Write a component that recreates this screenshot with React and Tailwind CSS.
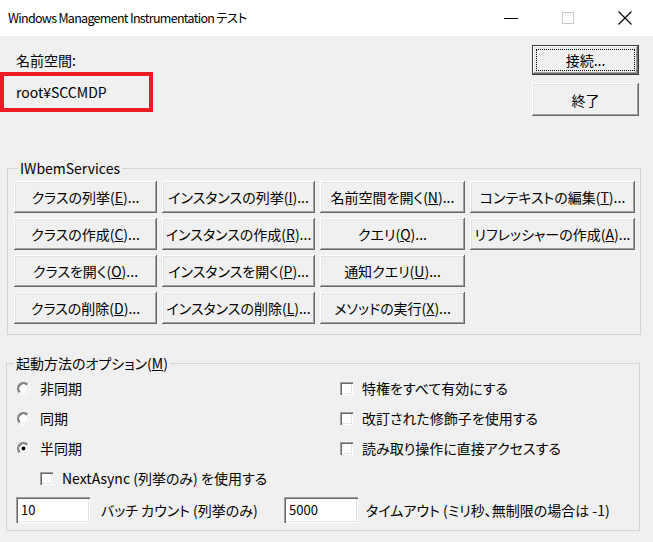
import React from "react";

const raised =
  "shadow-[inset_-1px_-1px_0_#696969,inset_1px_1px_0_#ffffff,inset_-2px_-2px_0_#a0a0a0,inset_2px_2px_0_#e3e3e3]";
const sunken =
  "shadow-[inset_1px_1px_0_#a0a0a0,inset_2px_2px_0_#696969,inset_-1px_-1px_0_#ffffff,inset_-2px_-2px_0_#e3e3e3]";

function Btn({ label, k, rest, className = "" }) {
  return (
    <button
      className={`flex items-center justify-center bg-[#f0f0f0] text-[14px] leading-[18px] text-black ${raised} ${className}`}
    >
      <span>
        {label}(<u>{k}</u>){rest}
      </span>
    </button>
  );
}

function Radio({ checked }) {
  return (
    <svg width="13" height="13" viewBox="0 0 12 12" className="shrink-0">
      <circle cx="6" cy="6" r="5.5" fill="#ffffff" />
      <path d="M2.11 9.89 A5.5 5.5 0 0 1 9.89 2.11" fill="none" stroke="#8a8a8a" strokeWidth="1.1" />
      <path d="M2.82 9.18 A4.5 4.5 0 0 1 9.18 2.82" fill="none" stroke="#5a5a5a" strokeWidth="1" />
      <path d="M2.11 9.89 A5.5 5.5 0 0 0 9.89 2.11" fill="none" stroke="#ffffff" strokeWidth="1" />
      <path d="M2.82 9.18 A4.5 4.5 0 0 0 9.18 2.82" fill="none" stroke="#e3e3e3" strokeWidth="1" />
      {checked && <circle cx="6" cy="6" r="1.8" fill="#000000" />}
    </svg>
  );
}

function Check() {
  return <div className={`h-[13px] w-[13px] shrink-0 bg-white ${sunken}`} />;
}

export default function App() {
  return (
    <div
      className="flex h-[542px] w-[653px] flex-col overflow-hidden bg-[#f0f0f0] text-black [font-feature-settings:'palt']"
      style={{ fontFamily: '"Noto Sans CJK JP", "Noto Sans", sans-serif' }}
    >
      {/* Title bar */}
      <div className="flex h-[36px] shrink-0 items-center bg-white">
        <div className="pl-[8px] text-[12.5px] leading-[20px] tracking-[-0.7px] [font-feature-settings:'normal']">
          Windows Management Instrumentation テスト
        </div>
        <div className="ml-auto flex h-full">
          <div className="flex w-[57px] items-center justify-center">
            <svg width="14" height="14" viewBox="0 0 14 14">
              <line x1="0" y1="7.5" x2="14" y2="7.5" stroke="#000" strokeWidth="1" />
            </svg>
          </div>
          <div className="flex w-[57px] items-center justify-center">
            <svg width="12" height="12" viewBox="0 0 12 12">
              <rect x="0.5" y="0.5" width="11" height="11" fill="none" stroke="#c8c8c8" strokeWidth="1" />
            </svg>
          </div>
          <div className="flex w-[57px] items-center justify-center">
            <svg width="14" height="14" viewBox="0 0 14 14">
              <path d="M0.5 0.5 L13.5 13.5 M13.5 0.5 L0.5 13.5" stroke="#000" strokeWidth="1.1" />
            </svg>
          </div>
        </div>
      </div>

      {/* Namespace area */}
      <div className="flex h-[123px] shrink-0 pr-[14px]">
        <div className="flex flex-col">
          <div className="mt-[14px] pl-[16px] text-[14px] leading-[20px]">名前空間:</div>
          <div className="mt-[2px] flex h-[40px] w-[153px] items-center border-4 border-[#ed1c24] pl-[12px] text-[14px] leading-[20px]">
            root¥SCCMDP
          </div>
        </div>
        <div className="ml-auto flex flex-col gap-[8px] pt-[9px]">
          <button
            className={`flex h-[30px] w-[107px] items-center justify-center border border-[#3c3c3c] bg-[#f0f0f0] text-[14px] leading-[18px] outline-1 outline-offset-[-5px] outline-dotted outline-black ${raised}`}
          >
            接続...
          </button>
          <button
            className={`flex h-[33px] w-[107px] items-center justify-center bg-[#f0f0f0] text-[14px] leading-[18px] ${raised}`}
          >
            終了
          </button>
        </div>
      </div>

      {/* IWbemServices */}
      <fieldset className="ml-[7px] w-[634px] min-w-0 border border-[#d4d4d4] pb-[10px] pl-[6px]">
        <legend className="ml-[4px] px-[2px] text-[14px] leading-[18px]">IWbemServices</legend>
        <div className="mt-[4px] grid grid-cols-[143px_153px_145px_165px] gap-x-[5px] gap-y-[5px]">
          <Btn className="h-[32px]" label="クラスの列挙" k="E" rest="..." />
          <Btn className="h-[32px]" label="インスタンスの列挙" k="I" rest="..." />
          <Btn className="h-[32px]" label="名前空間を開く" k="N" rest="..." />
          <Btn className="h-[32px]" label="コンテキストの編集" k="T" rest="..." />
          <Btn className="h-[32px]" label="クラスの作成" k="C" rest="..." />
          <Btn className="h-[32px]" label="インスタンスの作成" k="R" rest="..." />
          <Btn className="h-[32px]" label="クエリ" k="Q" rest="..." />
          <Btn className="h-[32px]" label="リフレッシャーの作成" k="A" rest="..." />
          <Btn className="h-[32px]" label="クラスを開く" k="O" rest="..." />
          <Btn className="h-[32px]" label="インスタンスを開く" k="P" rest="..." />
          <Btn className="h-[32px]" label="通知クエリ" k="U" rest="..." />
          <div />
          <Btn className="h-[32px]" label="クラスの削除" k="D" rest="..." />
          <Btn className="h-[32px]" label="インスタンスの削除" k="L" rest="..." />
          <Btn className="h-[32px]" label="メソッドの実行" k="X" rest="..." />
          <div />
        </div>
      </fieldset>

      {/* Options */}
      <fieldset className="ml-[6px] mt-[19px] w-[634px] min-w-0 border border-[#d4d4d4] pb-[7px]">
        <legend className="ml-[7px] px-[2px] text-[14px] leading-[18px]">
          起動方法のオプション(<u>M</u>)
        </legend>
        <div className="mt-[1px] flex">
          <div className="flex w-[333px] flex-col">
            {[
              ["非同期", false],
              ["同期", false],
              ["半同期", true],
            ].map(([t, c]) => (
              <div key={t} className="flex h-[30px] items-center pl-[10px]">
                <Radio checked={c} />
                <span className="ml-[10px] text-[14px] leading-[20px]">{t}</span>
              </div>
            ))}
          </div>
          <div className="flex flex-col">
            {["特権をすべて有効にする", "改訂された修飾子を使用する", "読み取り操作に直接アクセスする"].map((t) => (
              <div key={t} className="flex h-[30px] items-center">
                <Check />
                <span className="ml-[9px] text-[14px] leading-[20px]">{t}</span>
              </div>
            ))}
          </div>
        </div>
        <div className="flex h-[30px] items-center pl-[33px]">
          <Check />
          <span className="ml-[9px] text-[14px] leading-[20px]">NextAsync (列挙のみ) を使用する</span>
        </div>
        <div className="mt-[4px] flex items-center pl-[9px]">
          <div className="flex w-[268px] items-center">
            <div className={`flex h-[26px] w-[74px] items-center bg-white pl-[5px] text-[13px] ${sunken}`}>10</div>
            <span className="ml-[11px] text-[14px] leading-[20px]">バッチ カウント (列挙のみ)</span>
          </div>
          <div className={`flex h-[26px] w-[74px] items-center bg-white pl-[5px] text-[13px] ${sunken}`}>5000</div>
          <span className="ml-[8px] text-[14px] leading-[20px]">タイムアウト (ミリ秒、無制限の場合は -1)</span>
        </div>
      </fieldset>
    </div>
  );
}
